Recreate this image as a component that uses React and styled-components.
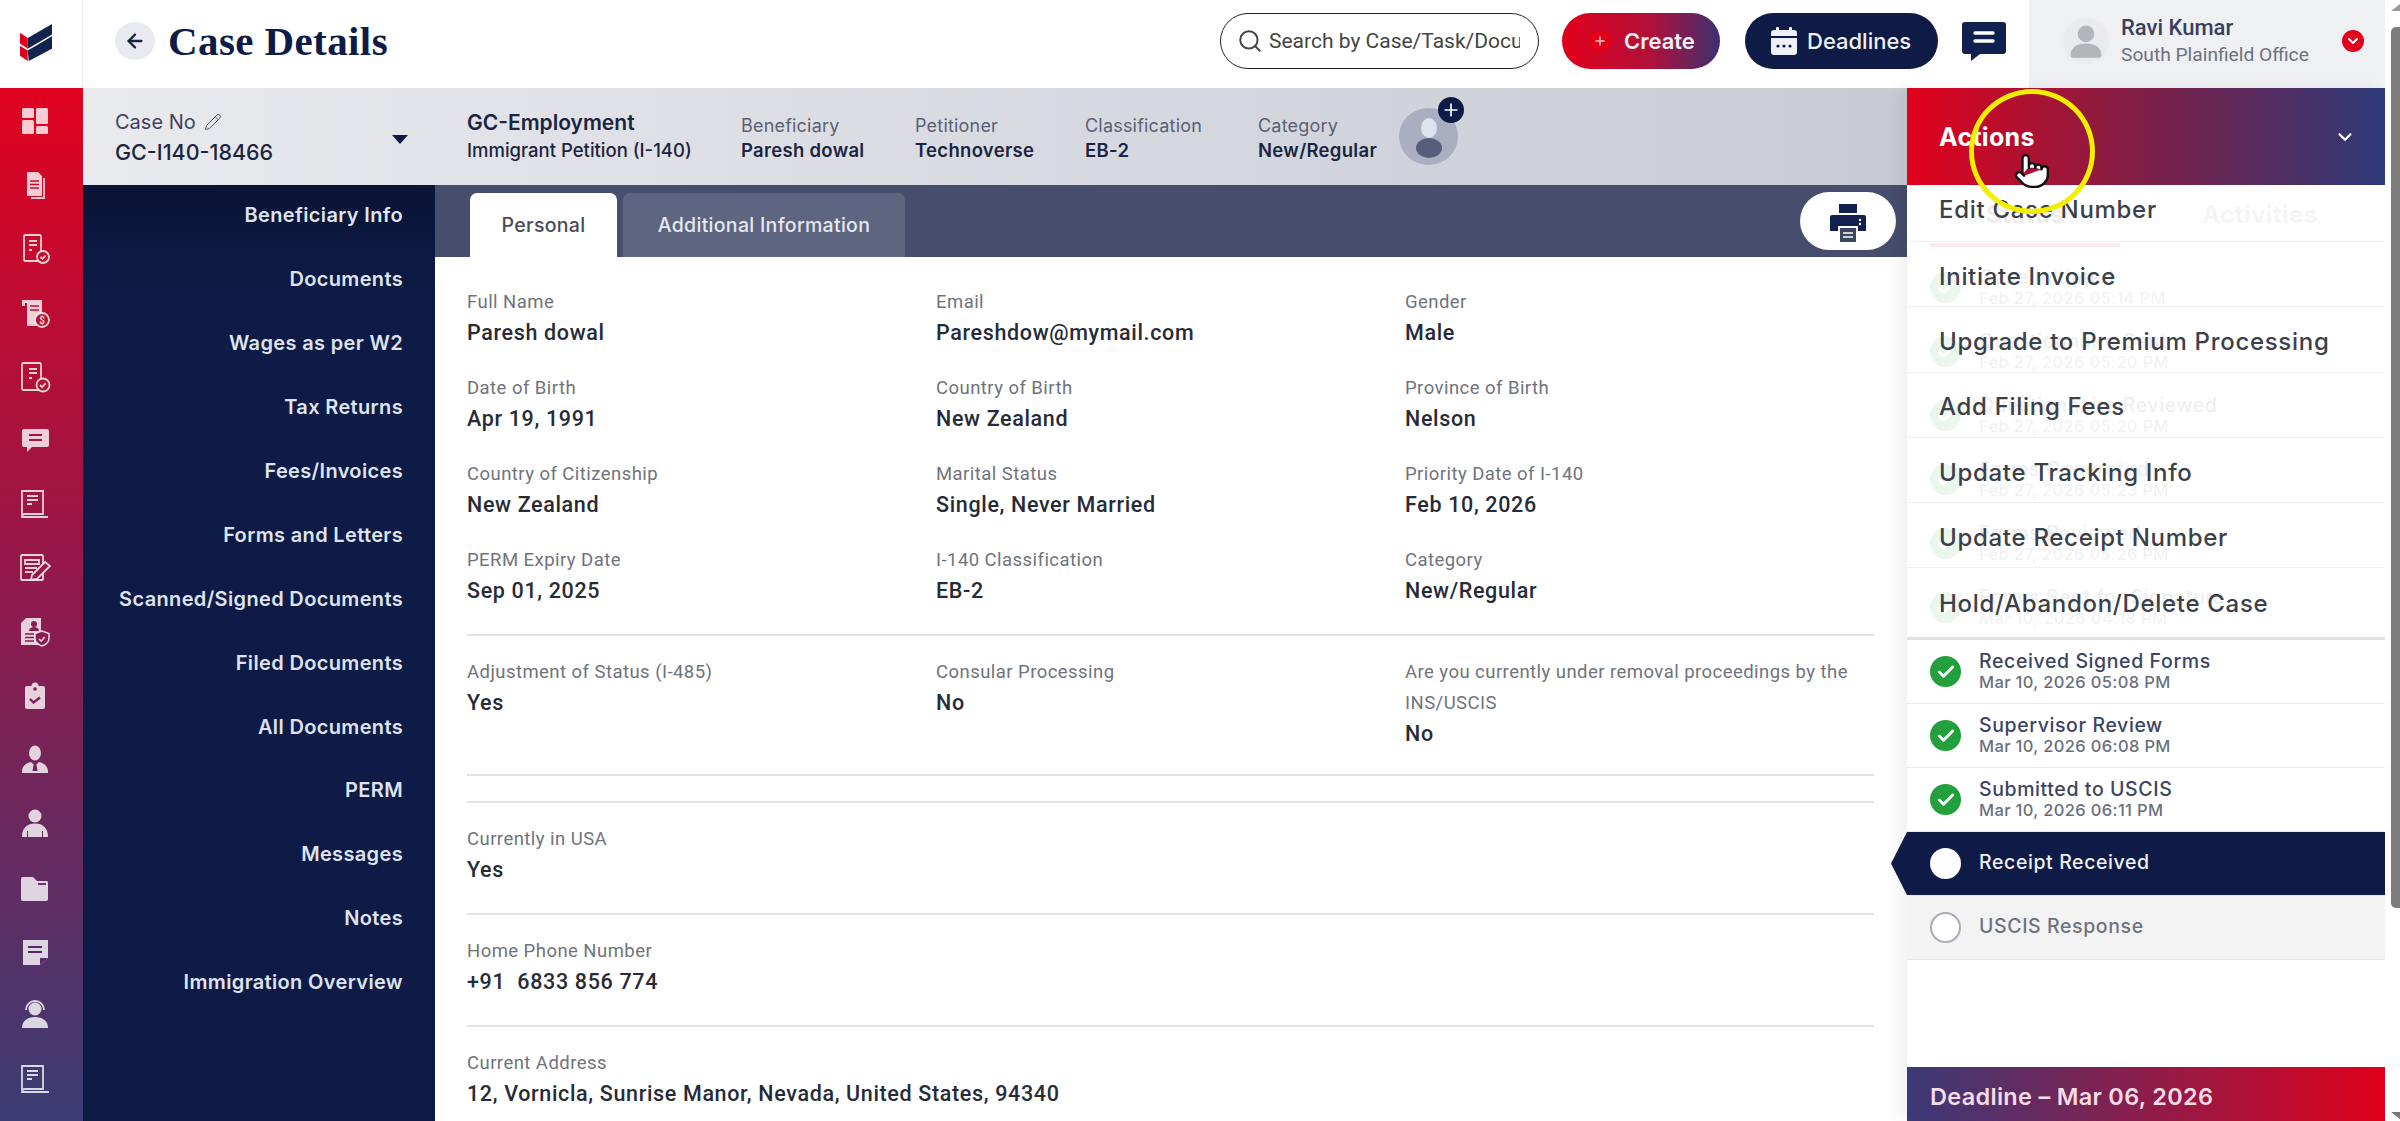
import React from 'react'
import styled, { createGlobalStyle } from 'styled-components'
import { ArrowLeft, Search, Plus, ChevronDown, Check, Pointer, Pencil } from 'lucide-react'

const SANS = `'Inter', 'Liberation Sans', sans-serif`
const ROBOTO = `'Roboto', 'Liberation Sans', sans-serif`
const NAVY = '#0d1b46'

const GlobalStyle = createGlobalStyle`
  html, body { margin: 0; padding: 0; background: #fff; overflow: hidden; }
  * { box-sizing: border-box; }
`

const Page = styled.div`
  position: relative;
  display: flex;
  width: 2400px;
  height: 1121px;
  overflow: hidden;
  font-family: ${SANS};
`

// Left icon rail
const Rail = styled.div`
  display: flex;
  flex-direction: column;
  flex: 0 0 83px;
`
const LogoCell = styled.div`
  display: flex;
  align-items: center;
  height: 88px;
  padding: 0 0 4px 20px;
  border-right: 1px solid #eceef2;
`
const RailIcons = styled.div`
  flex: 1;
  padding-top: 1px;
  background: linear-gradient(180deg, #e0021f 0%, #8f1a4d 50%, #3a3c74 100%);
`
const RailItem = styled.div`
  display: flex;
  align-items: center;
  height: 63.9px;
  padding-left: 19px;
  color: rgba(255, 255, 255, 0.8);
`

const IconSvg = styled.svg`
  width: 32px;
  height: 32px;
  display: block;
`

const docLines = (
  <g stroke="currentColor" strokeWidth="1.8" fill="none">
    <path d="M10 8h8M10 12h8M10 17h3" />
  </g>
)

const railIcons = [
  <IconSvg viewBox="0 0 32 32" fill="currentColor" key="dash">
    <rect x="3" y="3" width="12" height="10" rx="1.5" />
    <rect x="3" y="15" width="12" height="14" rx="1.5" />
    <rect x="17" y="3" width="12" height="16" rx="1.5" />
    <rect x="17" y="21" width="12" height="8" rx="1.5" />
  </IconSvg>,
  <IconSvg viewBox="0 0 32 32" fill="currentColor" key="docs">
    <path d="M8 3h11l4 4v20H8z" />
    <path d="M25 9v20H12" fill="none" stroke="currentColor" strokeWidth="1.8" />
    <path d="M11 12h9M11 15.5h9M11 19h9" stroke="#c80c30" strokeWidth="1.6" />
  </IconSvg>,
  <IconSvg viewBox="0 0 32 32" fill="none" stroke="currentColor" strokeWidth="1.8" key="form">
    <rect x="5" y="2" width="17" height="26" rx="1.5" />
    {docLines}
    <circle cx="24" cy="24" r="6" fill="#c1102f" />
    <path d="M21.5 24l2 2 3-3.5" />
  </IconSvg>,
  <IconSvg viewBox="0 0 32 32" fill="currentColor" key="receipt">
    <path d="M3 3h20v16h-5v10H8V6H6v3H3z" />
    <path d="M11 9h9M11 13h9" stroke="#b8122f" strokeWidth="1.6" />
    <circle cx="23" cy="23" r="7" fill="#b8122f" stroke="currentColor" strokeWidth="1.8" />
    <text x="23" y="27" fontSize="10" fontWeight="700" textAnchor="middle" fontFamily={ROBOTO}>$</text>
  </IconSvg>,
  <IconSvg viewBox="0 0 32 32" fill="none" stroke="currentColor" strokeWidth="1.8" key="form2">
    <rect x="3" y="2" width="19" height="27" rx="1.5" />
    {docLines}
    <circle cx="24" cy="24" r="6.5" fill="#b01336" />
    <path d="M21 24l2.2 2.2 3.5-4" />
  </IconSvg>,
  <IconSvg viewBox="0 0 32 32" fill="currentColor" key="chat">
    <path d="M5 5h23a2 2 0 0 1 2 2v14a2 2 0 0 1-2 2H13l-5 5v-5H5a2 2 0 0 1-2-2V7a2 2 0 0 1 2-2z" />
    <path d="M10 11h13M10 16h13" stroke="#a5163f" strokeWidth="2" />
  </IconSvg>,
  <IconSvg viewBox="0 0 32 32" fill="none" stroke="currentColor" strokeWidth="1.8" key="book">
    <path d="M3 27V3h21v23H6a3 3 0 0 0-3 3h26" />
    <path d="M8 8h11M8 12h11M8 16h5" />
  </IconSvg>,
  <IconSvg viewBox="0 0 32 32" fill="none" stroke="currentColor" strokeWidth="1.8" key="edit">
    <rect x="2" y="3" width="22" height="25" rx="1" />
    <path d="M6 8h14v4H6zM6 16h12M6 20h8" />
    <path d="M12 28l1-5L26 10l5 4-13 13z" fill="#951949" />
  </IconSvg>,
  <IconSvg viewBox="0 0 32 32" fill="currentColor" key="shield">
    <path d="M7 2h15v16h5v11H2V7z" />
    <circle cx="15" cy="8" r="3" fill="#8b1b50" />
    <path d="M10 15a5 4 0 0 1 10 0z" fill="#8b1b50" />
    <path d="M6 18h9M6 21.5h9M6 25h9" stroke="#8b1b50" strokeWidth="1.5" />
    <path d="M23 15l7 2.5v5c0 4-3 6-7 7.5-4-1.5-7-3.5-7-7.5v-5z" fill="#8b1b50" stroke="currentColor" strokeWidth="1.6" />
    <path d="M20 23l2.2 2 3.6-4" fill="none" stroke="currentColor" strokeWidth="1.6" />
  </IconSvg>,
  <IconSvg viewBox="0 0 32 32" fill="currentColor" key="clip">
    <path d="M8 6h4.5a3.5 3.5 0 0 1 7 0H24a2 2 0 0 1 2 2v19a2 2 0 0 1-2 2H8a2 2 0 0 1-2-2V8a2 2 0 0 1 2-2z" />
    <path d="M11 19l3.5 3.5 6.5-5" fill="none" stroke="#7c1e59" strokeWidth="2.4" />
    <circle cx="16" cy="9" r="1.8" fill="#7c1e59" />
  </IconSvg>,
  <IconSvg viewBox="0 0 32 32" fill="currentColor" key="tie">
    <ellipse cx="16" cy="9" rx="6" ry="7.5" />
    <path d="M3 28c0-6 4-9 9-10l4 4 4-4c5 1 9 4 9 10v1H3z" />
    <path d="M14.5 21h3l1 6h-5z" fill="#722160" />
  </IconSvg>,
  <IconSvg viewBox="0 0 32 32" fill="currentColor" key="bust">
    <circle cx="16" cy="8" r="6.5" />
    <path d="M3 29c0-9 5-13.5 13-13.5S29 20 29 29h-5v-6h-1v6H9v-6H8v6z" />
  </IconSvg>,
  <IconSvg viewBox="0 0 32 32" fill="currentColor" key="folder">
    <path d="M4 5h10l4 4h10a2 2 0 0 1 1 2v16a2 2 0 0 1-2 2H4a2 2 0 0 1-2-2V7a2 2 0 0 1 2-2z" />
    <path d="M19 12h8" stroke="#5f2869" strokeWidth="1.8" />
  </IconSvg>,
  <IconSvg viewBox="0 0 32 32" fill="currentColor" key="note">
    <path d="M4 4h25v18l-8 7H4z" />
    <path d="M9 11h14M9 16h14" stroke="#55296c" strokeWidth="2" />
    <path d="M21 29v-7h8z" fill="#55296c" />
  </IconSvg>,
  <IconSvg viewBox="0 0 32 32" fill="currentColor" key="headset">
    <circle cx="16" cy="10" r="6.5" />
    <path d="M7 11a9 9 0 0 1 18 0" fill="none" stroke="currentColor" strokeWidth="1.8" />
    <path d="M3 29c0-7 5-11 13-11s13 4 13 11z" />
  </IconSvg>,
  <IconSvg viewBox="0 0 32 32" fill="none" stroke="currentColor" strokeWidth="1.8" key="book2">
    <path d="M3 27V3h21v23H6a3 3 0 0 0-3 3h27" />
    <path d="M8 8h11M8 12h11M8 16h5" />
  </IconSvg>,
]

// Top bar
const Main = styled.div`
  display: flex;
  flex-direction: column;
  flex: 0 0 2302px;
`
const TopBar = styled.div`
  display: flex;
  align-items: center;
  flex: 0 0 88px;
  padding: 0 0 6px 32px;
`
const BackButton = styled.button`
  display: flex;
  align-items: center;
  justify-content: center;
  width: 40px;
  height: 38px;
  padding: 0;
  border: 0;
  border-radius: 50%;
  background: #e8eaf0;
  color: #1b2440;
`
const Title = styled.h1`
  margin: 0 0 0 13px;
  font-family: 'Liberation Serif', serif;
  font-size: 41px;
  font-weight: 700;
  letter-spacing: 0.4px;
  line-height: 50px;
  color: ${NAVY};
`
const SearchBox = styled.div`
  display: flex;
  align-items: center;
  width: 319px;
  height: 56px;
  margin-left: auto;
  padding: 0 18px 0 16px;
  border: 1.5px solid #222;
  border-radius: 28px;
  color: #444;
`
const SearchInput = styled.input`
  flex: 1;
  min-width: 0;
  margin-left: 6px;
  padding: 0;
  border: 0;
  outline: none;
  background: transparent;
  font-family: ${ROBOTO};
  font-size: 21px;
  &::placeholder { color: #444; opacity: 1; }
`
const PillButton = styled.button`
  display: flex;
  align-items: center;
  height: 56px;
  margin-left: ${(p) => p.$ml}px;
  padding: 0;
  border: 0;
  border-radius: 28px;
  font-family: ${SANS};
  font-size: 22px;
  font-weight: 500;
  color: #eef0f6;
`
const CreateButton = styled(PillButton)`
  width: 158px;
  padding-left: 27px;
  gap: 13px;
  font-size: 22px;
  font-weight: 600;
  background: linear-gradient(90deg, #e2001a 0%, #b3103a 55%, #3d2f70 100%);
`
const DeadlinesButton = styled(PillButton)`
  width: 193px;
  padding-left: 26px;
  gap: 10px;
  background: ${NAVY};
`
const PlusDot = styled.span`
  display: flex;
  align-items: center;
  justify-content: center;
  width: 22px;
  height: 22px;
  border-radius: 50%;
  background: #e2001a;
  color: #f7c7cf;
`
const ChatButton = styled.div`
  display: flex;
  margin-left: 24px;
`
const UserPanel = styled.div`
  display: flex;
  align-items: center;
  align-self: flex-start;
  flex: 0 0 356px;
  height: 88px;
  margin: 0 0 -6px 23px;
  padding: 0 0 6px 34px;
  background: #eef0f4;
`
const Avatar = styled.div`
  display: flex;
  align-items: center;
  justify-content: center;
  width: 46px;
  height: 46px;
  border-radius: 50%;
  background: #e9ebef;
`
const UserText = styled.div`
  margin-left: 12px;
  font-family: ${ROBOTO};
`
const UserName = styled.div`
  font-size: 22px;
  font-weight: 500;
  line-height: 28px;
  color: #39405a;
`
const UserOffice = styled.div`
  font-size: 19.2px;
  line-height: 26px;
  color: #6c7180;
`
const UserCaret = styled.div`
  display: flex;
  align-items: center;
  justify-content: center;
  width: 22px;
  height: 22px;
  margin-left: 33px;
  border-radius: 50%;
  background: #e2001a;
  color: #fff;
`

// Case area
const CaseArea = styled.div`
  display: flex;
  flex: 1;
  min-height: 0;
`
const CaseColumn = styled.div`
  display: flex;
  flex-direction: column;
  flex: 0 0 1824px;
  min-width: 0;
`
const CaseHeader = styled.div`
  display: flex;
  align-items: center;
  flex: 0 0 97px;
  padding-left: 32px;
  background: linear-gradient(90deg, #e9eaee 0%, #c8cbd4 100%);
`
const CaseBlock = styled.div`
  position: relative;
  flex: 0 0 ${(p) => p.$w}px;
`
const CaseNoLabel = styled.div`
  display: flex;
  align-items: center;
  gap: 8px;
  font-size: 20px;
  line-height: 30px;
  color: #3d4460;
`
const CaseNoValue = styled.div`
  font-size: 21.5px;
  font-weight: 500;
  line-height: 30px;
  color: #1b2440;
`
const Caret = styled.span`
  position: absolute;
  top: 28px;
  left: 277px;
  border-style: solid;
  border-width: 9px 8px 0;
  border-color: ${NAVY} transparent transparent;
`
const TypeName = styled.div`
  font-size: 21px;
  font-weight: 600;
  line-height: 28px;
  color: #1b2440;
`
const TypeSub = styled.div`
  font-size: 18.5px;
  font-weight: 500;
  line-height: 27px;
  color: #1b2440;
`
const InfoStack = styled.div`
  padding-top: 3px;
`
const InfoLabel = styled.div`
  font-size: 18px;
  letter-spacing: 0.2px;
  line-height: 25px;
  color: #5b6074;
`
const InfoValue = styled.div`
  font-size: 18.5px;
  font-weight: 600;
  letter-spacing: 0.3px;
  line-height: 25px;
  color: #1b2440;
`
const PersonBubble = styled.div`
  position: relative;
  display: flex;
  align-items: center;
  justify-content: center;
  width: 59px;
  height: 57px;
  border-radius: 50%;
  background: #a9afc1;
  color: #fff;
`
const PlusBadge = styled.span`
  position: absolute;
  top: -11px;
  right: -6px;
  display: flex;
  align-items: center;
  justify-content: center;
  width: 26px;
  height: 26px;
  border-radius: 50%;
  background: ${NAVY};
  color: #fff;
`

const Body = styled.div`
  display: flex;
  flex: 1;
  min-height: 0;
`
const SideNav = styled.nav`
  flex: 0 0 352px;
  background: linear-gradient(180deg, #0a1436 0%, ${NAVY} 12%);
`
const SideItem = styled.div`
  display: flex;
  align-items: center;
  justify-content: flex-end;
  height: 63.9px;
  padding: 0 32px 3px 0;
  font-size: 20px;
  font-weight: 600;
  letter-spacing: 0.35px;
  color: #dfe3ee;
`
const Content = styled.div`
  display: flex;
  flex-direction: column;
  flex: 1;
  min-width: 0;
`
const TabBand = styled.div`
  position: relative;
  display: flex;
  align-items: flex-end;
  flex: 0 0 72px;
  gap: 6px;
  padding-left: 35px;
  background: #474e6d;
`
const Tab = styled.div`
  display: flex;
  align-items: center;
  justify-content: center;
  width: ${(p) => p.$w}px;
  height: 64px;
  border-radius: 7px 7px 0 0;
  font-size: 19.5px;
  font-weight: 500;
  letter-spacing: 0.3px;
  background: ${(p) => (p.$active ? '#fff' : '#5d6580')};
  color: ${(p) => (p.$active ? '#474b57' : '#e6e8ee')};
`
const PrintButton = styled.div`
  position: absolute;
  top: 7px;
  right: 11px;
  display: flex;
  align-items: center;
  justify-content: center;
  width: 96px;
  height: 58px;
  padding-top: 4px;
  border-radius: 29px;
  background: #fff;
`
const Details = styled.div`
  flex: 1;
  overflow: hidden;
  padding: 0 33px 0 32px;
  background: #fff;
`
const FieldGrid = styled.div`
  display: grid;
  grid-template-columns: repeat(3, 469px);
  row-gap: 25px;
  padding: ${(p) => p.$pt}px 0 ${(p) => p.$pb}px;
  border-top: ${(p) => (p.$first ? '0' : '2px solid #e2e2e2')};
`
const FieldLabel = styled.div`
  font-family: ${ROBOTO};
  font-size: 18.5px;
  letter-spacing: 0.45px;
  line-height: 31px;
  color: #70737c;
`
const FieldValue = styled.div`
  font-family: ${ROBOTO};
  font-size: 21.5px;
  font-weight: 500;
  letter-spacing: 0.65px;
  line-height: 30px;
  white-space: pre;
  color: #272b38;
`
const WideField = styled.div`
  grid-column: 1 / -1;
`

const Field = ({ label, value }) => (
  <div>
    <FieldLabel>{label}</FieldLabel>
    <FieldValue>{value}</FieldValue>
  </div>
)

// Right panel
const SidePanel = styled.aside`
  position: relative;
  z-index: 2;
  display: flex;
  flex-direction: column;
  flex: 1;
  background: #fff;
  box-shadow: -10px 0 14px rgba(0, 0, 0, 0.05);
`
const ActionsBar = styled.div`
  display: flex;
  align-items: center;
  justify-content: space-between;
  flex: 0 0 97px;
  padding: 0 29px 0 32px;
  font-size: 25px;
  font-weight: 700;
  letter-spacing: 0.3px;
  color: #fff;
  background: linear-gradient(90deg, #e2001a 0%, #8f1a3e 40%, #2c3a78 100%);
`
const PanelTabs = styled.div`
  display: flex;
  flex: 0 0 71px;
`
const PanelTab = styled.div`
  display: flex;
  align-items: center;
  justify-content: center;
  width: ${(p) => p.$w}px;
  margin-left: ${(p) => p.$ml}px;
  height: 62px;
  font-size: 24px;
  font-weight: 700;
  letter-spacing: 0.5px;
  color: ${(p) => (p.$active ? '#333' : '#8c8c8c')};
  border-bottom: 4px solid ${(p) => (p.$active ? '#e2001a' : 'transparent')};
`
const ActivityRow = styled.div`
  position: relative;
  display: flex;
  align-items: center;
  height: 64px;
  padding-left: 23px;
  border-bottom: 1px solid #e8e8e8;
  background: ${(p) => (p.$state === 'active' ? NAVY : p.$state === 'todo' ? '#f3f3f3' : '#fff')};
  &::before {
    content: '';
    display: ${(p) => (p.$state === 'active' ? 'block' : 'none')};
    position: absolute;
    top: 0;
    bottom: 0;
    left: -16px;
    width: 16px;
    background: ${NAVY};
    clip-path: polygon(100% 0, 100% 100%, 0 50%);
  }
`
const StatusDot = styled.span`
  display: flex;
  align-items: center;
  justify-content: center;
  flex: 0 0 31px;
  height: 31px;
  border-radius: 50%;
  background: ${(p) => (p.$state === 'done' ? '#21a03c' : '#fff')};
  border: ${(p) => (p.$state === 'todo' ? '2px solid #a9acb4' : '0')};
  color: #fff;
`
const ActivityText = styled.div`
  margin: 0 0 ${(p) => (p.$single ? 3 : 0)}px 18px;
`
const ActivityTitle = styled.div`
  font-size: 19.5px;
  font-weight: 500;
  letter-spacing: 0.6px;
  line-height: 22px;
  color: ${(p) => (p.$state === 'active' ? '#eef0f6' : p.$state === 'todo' ? '#6f7280' : '#3c4464')};
`
const ActivityDate = styled.div`
  font-size: 16.5px;
  font-weight: 500;
  letter-spacing: 0.35px;
  line-height: 21px;
  color: #6a6f80;
`
const PanelGap = styled.div`
  flex: 1;
`
const DeadlineBar = styled.div`
  display: flex;
  align-items: center;
  flex: 0 0 54px;
  padding: 4px 0 0 23px;
  font-size: 23.5px;
  font-weight: 600;
  letter-spacing: 0.3px;
  color: #f3dce5;
  background: linear-gradient(90deg, #3a3a78 0%, #e0001b 100%);
`
const ActionMenu = styled.div`
  position: absolute;
  top: 97px;
  left: 0;
  right: 0;
  height: 455px;
  background: rgba(255, 255, 255, 0.91);
  border-bottom: 3px solid rgba(205, 205, 205, 0.6);
`
const MenuItem = styled.div`
  display: flex;
  align-items: center;
  height: 65.3px;
  padding: 4px 0 0 32px;
  font-size: 24px;
  font-weight: 500;
  letter-spacing: 0.7px;
  color: #3c4048;
  border-bottom: 1px solid rgba(0, 0, 0, 0.06);
  &:first-child {
    height: 57px;
    padding: 0 0 7px 32px;
  }
  &:last-child {
    border-bottom: 0;
  }
`

// Scrollbar and cursor highlight
const ScrollTrack = styled.div`
  position: relative;
  flex: 0 0 15px;
  background: #fff;
`
const ScrollThumb = styled.div`
  position: absolute;
  top: 27px;
  right: 0;
  width: 9px;
  height: 881px;
  border-radius: 5px 0 0 5px;
  background: #7c7c7c;
`
const ScrollArrow = styled.span`
  position: absolute;
  right: 0;
  ${(p) => (p.$down ? 'bottom: 2px;' : 'top: 4px;')}
  border-style: solid;
  border-width: ${(p) => (p.$down ? '7px 0 0 9px' : '0 0 7px 9px')};
  border-color: ${(p) => (p.$down ? '#777 transparent transparent transparent' : 'transparent transparent #999 transparent')};
`
const CursorRing = styled.div`
  position: absolute;
  z-index: 5;
  left: 1969px;
  top: 89px;
  width: 126px;
  height: 125px;
  border: 5px solid #f4ee00;
  border-radius: 50%;
  pointer-events: none;
`
const CursorHand = styled.div`
  position: absolute;
  z-index: 6;
  left: 2013px;
  top: 152px;
  color: #111;
`

const sideItems = [
  'Beneficiary Info', 'Documents', 'Wages as per W2', 'Tax Returns', 'Fees/Invoices',
  'Forms and Letters', 'Scanned/Signed Documents', 'Filed Documents', 'All Documents',
  'PERM', 'Messages', 'Notes', 'Immigration Overview',
]

const personalFields = [
  ['Full Name', 'Paresh dowal'], ['Email', 'Pareshdow@mymail.com'], ['Gender', 'Male'],
  ['Date of Birth', 'Apr 19, 1991'], ['Country of Birth', 'New Zealand'], ['Province of Birth', 'Nelson'],
  ['Country of Citizenship', 'New Zealand'], ['Marital Status', 'Single, Never Married'], ['Priority Date of I-140', 'Feb 10, 2026'],
  ['PERM Expiry Date', 'Sep 01, 2025'], ['I-140 Classification', 'EB-2'], ['Category', 'New/Regular'],
]

const infoItems = [
  ['Beneficiary', 'Paresh dowal', 174],
  ['Petitioner', 'Technoverse', 170],
  ['Classification', 'EB-2', 173],
  ['Category', 'New/Regular', 141],
]

const activities = [
  ['Case Initiated', 'Feb 27, 2026 05:14 PM', 'done'],
  ['Questionnaire Sent', 'Feb 27, 2026 05:20 PM', 'done'],
  ['Questionnaire Reviewed', 'Feb 27, 2026 05:20 PM', 'done'],
  ['Forms Generated', 'Feb 27, 2026 05:23 PM', 'done'],
  ['Forms Reviewed', 'Feb 27, 2026 05:26 PM', 'done'],
  ['Forms Sent for Signature', 'Mar 10, 2026 04:18 PM', 'done'],
  ['Received Signed Forms', 'Mar 10, 2026 05:08 PM', 'done'],
  ['Supervisor Review', 'Mar 10, 2026 06:08 PM', 'done'],
  ['Submitted to USCIS', 'Mar 10, 2026 06:11 PM', 'done'],
  ['Receipt Received', null, 'active'],
  ['USCIS Response', null, 'todo'],
]

const menuItems = [
  'Edit Case Number', 'Initiate Invoice', 'Upgrade to Premium Processing', 'Add Filing Fees',
  'Update Tracking Info', 'Update Receipt Number', 'Hold/Abandon/Delete Case',
]

const Logo = () => (
  <svg width="32" height="37" viewBox="10 8 33 42" preserveAspectRatio="none">
    <path d="M18 24L43 8v12L18 36z" fill="#14224f" />
    <path d="M10 18l8 6v12l-8-6z" fill="#e2001a" />
    <path d="M18 38l25-16v14L19 50z" fill="#14224f" />
    <path d="M10 33l8 5v12l-8-6z" fill="#e2001a" />
  </svg>
)

const PersonGlyph = ({ size, color }) => (
  <svg width={size} height={size} viewBox="0 0 32 32" fill={color}>
    <circle cx="16" cy="10" r="7" />
    <path d="M3 28c0-7 6-10 13-10s13 3 13 10c0 1-1 2-2 2H5c-1 0-2-1-2-2z" />
  </svg>
)

const App = () => (
  <Page>
    <GlobalStyle />
    <Rail>
      <LogoCell>
        <Logo />
      </LogoCell>
      <RailIcons>
        {railIcons.map((icon) => (
          <RailItem key={icon.key}>{icon}</RailItem>
        ))}
      </RailIcons>
    </Rail>

    <Main>
      <TopBar>
        <BackButton>
          <ArrowLeft size={22} strokeWidth={2.5} />
        </BackButton>
        <Title>Case Details</Title>
        <SearchBox>
          <Search size={26} strokeWidth={1.8} />
          <SearchInput placeholder="Search by Case/Task/Document" />
        </SearchBox>
        <CreateButton $ml={23}>
          <PlusDot>
            <Plus size={14} strokeWidth={2.5} />
          </PlusDot>
          Create
        </CreateButton>
        <DeadlinesButton $ml={25}>
          <svg width="26" height="28" viewBox="0 0 26 28" fill="#eef0f6">
            <rect x="5" y="0" width="3" height="6" rx="1" />
            <rect x="18" y="0" width="3" height="6" rx="1" />
            <path d="M3 3h20a3 3 0 0 1 3 3v3H0V6a3 3 0 0 1 3-3zM0 11h26v14a3 3 0 0 1-3 3H3a3 3 0 0 1-3-3z" />
            <circle cx="7" cy="19" r="1.6" fill={NAVY} />
            <circle cx="13" cy="19" r="1.6" fill={NAVY} />
            <circle cx="19" cy="19" r="1.6" fill={NAVY} />
          </svg>
          Deadlines
        </DeadlinesButton>
        <ChatButton>
          <svg width="44" height="39" viewBox="0 0 44 39">
            <path d="M3 0h38a3 3 0 0 1 3 3v26a3 3 0 0 1-3 3H18l-9 7v-7H3a3 3 0 0 1-3-3V3a3 3 0 0 1 3-3z" fill="#10204f" />
            <path d="M13 11h18M13 19h18" stroke="#fff" strokeWidth="3.5" strokeLinecap="round" />
          </svg>
        </ChatButton>
        <UserPanel>
          <Avatar>
            <PersonGlyph size={38} color="#b3b5bb" />
          </Avatar>
          <UserText>
            <UserName>Ravi Kumar</UserName>
            <UserOffice>South Plainfield Office</UserOffice>
          </UserText>
          <UserCaret>
            <ChevronDown size={16} strokeWidth={3} />
          </UserCaret>
        </UserPanel>
      </TopBar>

      <CaseArea>
        <CaseColumn>
          <CaseHeader>
            <CaseBlock $w={352}>
              <CaseNoLabel>
                Case No
                <Pencil size={18} strokeWidth={1.2} />
              </CaseNoLabel>
              <CaseNoValue>GC-I140-18466</CaseNoValue>
              <Caret />
            </CaseBlock>
            <CaseBlock $w={274}>
              <TypeName>GC-Employment</TypeName>
              <TypeSub>Immigrant Petition (I-140)</TypeSub>
            </CaseBlock>
            {infoItems.map(([label, value, width]) => (
              <CaseBlock $w={width} key={label}>
                <InfoStack>
                  <InfoLabel>{label}</InfoLabel>
                  <InfoValue>{value}</InfoValue>
                </InfoStack>
              </CaseBlock>
            ))}
            <PersonBubble>
              <svg width="34" height="44" viewBox="0 0 34 44">
                <ellipse cx="17" cy="13" rx="8" ry="10" fill="#dfe3ee" />
                <ellipse cx="17" cy="33" rx="13" ry="10" fill="#565e7c" />
              </svg>
              <PlusBadge>
                <Plus size={20} strokeWidth={2} />
              </PlusBadge>
            </PersonBubble>
          </CaseHeader>

          <Body>
            <SideNav>
              {sideItems.map((item) => (
                <SideItem key={item}>{item}</SideItem>
              ))}
            </SideNav>
            <Content>
              <TabBand>
                <Tab $w={147} $active>Personal</Tab>
                <Tab $w={282}>Additional Information</Tab>
                <PrintButton>
                  <svg width="36" height="38" viewBox="0 0 36 38">
                    <rect x="9" y="0" width="18" height="9" fill="#10204f" />
                    <path d="M2 11h32a2 2 0 0 1 2 2v14H0V13a2 2 0 0 1 2-2z" fill="#10204f" />
                    <rect x="8" y="22" width="20" height="16" fill="#fff" />
                    <rect x="10" y="24" width="16" height="14" fill="#3d4560" />
                    <path d="M13 29h10M13 33h10" stroke="#fff" strokeWidth="1.5" />
                    <circle cx="30" cy="16" r="1.2" fill="#fff" />
                    <circle cx="30" cy="20" r="1.2" fill="#fff" />
                  </svg>
                </PrintButton>
              </TabBand>
              <Details>
                <FieldGrid $first $pt={30} $pb={28}>
                  {personalFields.map(([label, value]) => (
                    <Field key={label} label={label} value={value} />
                  ))}
                </FieldGrid>
                <FieldGrid $pt={21} $pb={25}>
                  <Field label="Adjustment of Status (I-485)" value="Yes" />
                  <Field label="Consular Processing" value="No" />
                  <Field label="Are you currently under removal proceedings by the INS/USCIS" value="No" />
                </FieldGrid>
                <FieldGrid $pt={25} $pb={0} />
                <FieldGrid $pt={21} $pb={28}>
                  <Field label="Currently in USA" value="Yes" />
                </FieldGrid>
                <FieldGrid $pt={21} $pb={28}>
                  <Field label="Home Phone Number" value="+91  6833 856 774" />
                </FieldGrid>
                <FieldGrid $pt={21} $pb={0}>
                  <WideField>
                    <Field label="Current Address" value="12, Vornicla, Sunrise Manor, Nevada, United States, 94340" />
                  </WideField>
                </FieldGrid>
              </Details>
            </Content>
          </Body>
        </CaseColumn>

        <SidePanel>
          <ActionsBar>
            Actions
            <ChevronDown size={22} strokeWidth={2.5} />
          </ActionsBar>
          <PanelTabs>
            <PanelTab $w={190} $ml={23} $active>Status</PanelTab>
            <PanelTab $w={220} $ml={30}>Activities</PanelTab>
          </PanelTabs>
          {activities.map(([title, date, state]) => (
            <ActivityRow key={title} $state={state}>
              <StatusDot $state={state}>
                {state === 'done' && <Check size={20} strokeWidth={3.5} />}
              </StatusDot>
              <ActivityText $single={!date}>
                <ActivityTitle $state={state}>{title}</ActivityTitle>
                {date && <ActivityDate>{date}</ActivityDate>}
              </ActivityText>
            </ActivityRow>
          ))}
          <PanelGap />
          <DeadlineBar>Deadline – Mar 06, 2026</DeadlineBar>
          <ActionMenu>
            {menuItems.map((item) => (
              <MenuItem key={item}>{item}</MenuItem>
            ))}
          </ActionMenu>
        </SidePanel>
      </CaseArea>
    </Main>

    <ScrollTrack>
      <ScrollArrow />
      <ScrollThumb />
      <ScrollArrow $down />
    </ScrollTrack>

    <CursorRing />
    <CursorHand>
      <Pointer size={38} fill="#fff" strokeWidth={1.5} />
    </CursorHand>
  </Page>
)

export default App
